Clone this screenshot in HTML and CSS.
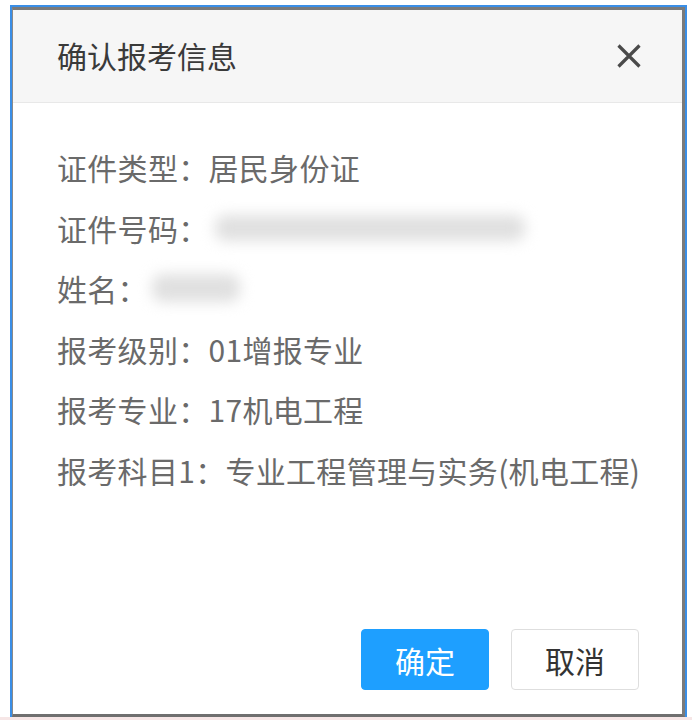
FILE: index.html
```html
<!DOCTYPE html>
<html lang="zh-CN">
<head>
<meta charset="utf-8">
<title>确认报考信息</title>
<link rel="stylesheet" href="styles.css">
</head>
<body>
<div class="page">
  <div class="frame">
    <div class="dialog">
      <div class="header">
        <span class="title">确认报考信息</span>
        <span class="close" aria-label="关闭">
          <svg width="26" height="26" viewBox="0 0 26 26"><path d="M2.5 2.5 L23.5 23.5 M23.5 2.5 L2.5 23.5" stroke="#4a4a4a" stroke-width="3.2" stroke-linecap="butt"/></svg>
        </span>
      </div>
      <div class="content">
        <div class="row">证件类型：居民身份证</div>
        <div class="row">证件号码：<span class="blur blur-id"></span></div>
        <div class="row">姓名：<span class="blur blur-name"></span></div>
        <div class="row">报考级别：01增报专业</div>
        <div class="row">报考专业：17机电工程</div>
        <div class="row">报考科目1：专业工程管理与实务(机电工程)</div>
      </div>
      <div class="actions">
        <span class="btn btn-primary">确定</span>
        <span class="btn btn-default">取消</span>
      </div>
    </div>
  </div>
  <div class="under"></div>
</div>
</body>
</html>
```

FILE: styles.css
```css
html, body {
  margin: 0;
  padding: 0;
  background: #ffffff;
}
body {
  font-family: "Noto Sans CJK SC", "Noto Sans", sans-serif;
}
.page {
  width: 692px;
  height: 720px;
  display: flex;
  flex-direction: column;
  padding: 5px 0 0 10px;
  box-sizing: border-box;
}
.frame {
  width: 677px;
  height: 712px;
  box-sizing: border-box;
  border: 2px solid #3a8ee6;
  border-bottom-width: 0;
  display: flex;
}
.under {
  height: 3px;
  margin-left: -10px;
  width: 692px;
  background: #f6e6e6;
}
.dialog {
  flex: 1;
  min-width: 0;
  overflow: hidden;
  display: flex;
  flex-direction: column;
  background: #ffffff;
  border-left: 1px solid #8a8a8a;
  border-top: 3px solid #7a7a7a;
  border-right: 3px solid #7a7a7a;
  border-bottom: 3px solid #6f6f6f;
}
.header {
  height: 92px;
  flex: none;
  background: #f6f6f6;
  border-bottom: 1px solid #e8e8e8;
  display: flex;
  align-items: center;
  justify-content: space-between;
  padding: 0 40px 0 44px;
}
.title {
  font-size: 30px;
  color: #3a3a3a;
  line-height: 1;
  margin-top: -2px;
}
.close {
  display: flex;
  width: 26px;
  height: 26px;
}
.content {
  flex: 1;
  min-width: 0;
  padding: 34px 0 0 44px;
  color: #6a6a6a;
  font-size: 30px;
  letter-spacing: 0.3px;
}
.row {
  height: 60.6px;
  line-height: 60.6px;
  white-space: nowrap;
  display: flex;
  align-items: center;
}
.blur {
  display: inline-block;
  background: #e0e0e0;
  filter: blur(7px);
  border-radius: 10px;
}
.blur-id {
  width: 310px;
  height: 26px;
  margin-left: 6px;
}
.blur-name {
  width: 88px;
  height: 28px;
  margin-left: 4px;
}
.actions {
  flex: none;
  display: flex;
  justify-content: flex-end;
  gap: 22px;
  padding: 0 43px 24px 0;
}
.btn {
  width: 128px;
  height: 61px;
  box-sizing: border-box;
  border-radius: 4px;
  display: flex;
  align-items: center;
  justify-content: center;
  font-size: 30px;
}
.btn-primary {
  background: #1e9fff;
  border: 1px solid #1e9fff;
  color: #ffffff;
}
.btn-default {
  background: #ffffff;
  border: 1px solid #dedede;
  color: #333333;
}
```
